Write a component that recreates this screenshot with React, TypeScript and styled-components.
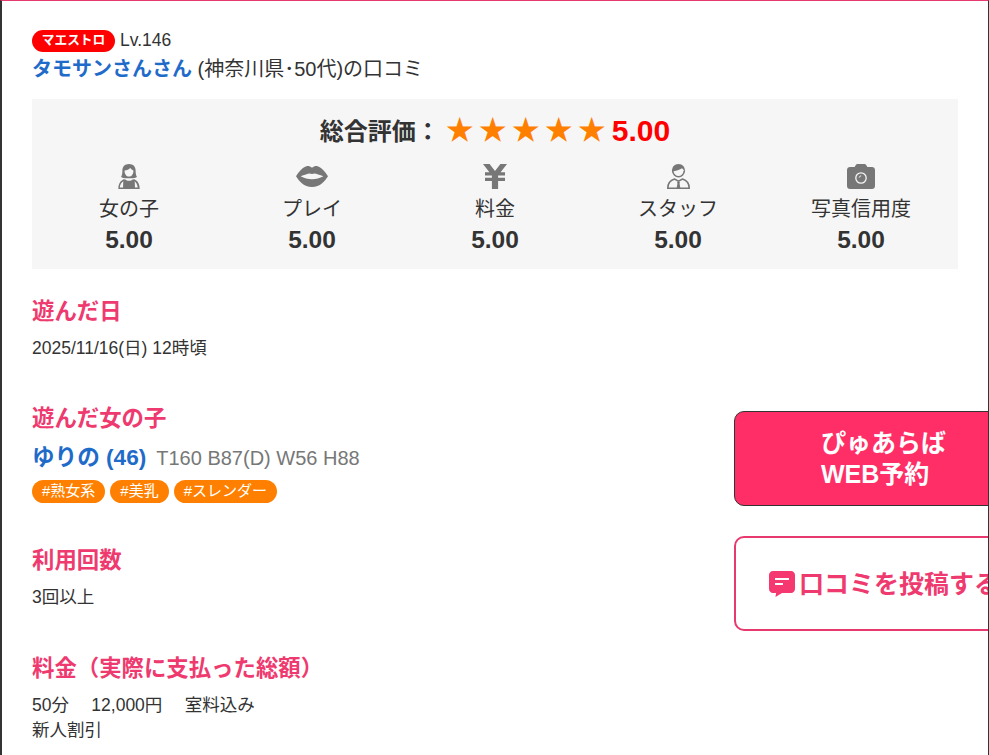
import styled, {createGlobalStyle} from "styled-components";

const GlobalStyle = createGlobalStyle`
    html, body {
        margin: 0;
        padding: 0;
        background: #fff;
        overflow: hidden;
    }
    body {
        font-family: "Liberation Sans", "Noto Sans CJK JP", sans-serif;
        color: #333;
    }
`

const scores = [
    {label: "女の子", icon: <GirlIcon/>},
    {label: "プレイ", icon: <LipsIcon/>},
    {label: "料金", icon: <YenIcon/>},
    {label: "スタッフ", icon: <StaffIcon/>},
    {label: "写真信用度", icon: <CameraIcon/>},
];

const tags = ["#熟女系", "#美乳", "#スレンダー"];

function GirlIcon(){
    return(
        <svg width="22" height="25" viewBox="0 0 22 25">
            <path fill="#777" d="M11 0C6.800 0 4.400 2.800 4.400 6.400c0 2.800-.4 4.800-1.400 6.600 1.400.8 3 1.200 4.400 1.200h7.200c1.400 0 3-.4 4.400-1.200-1-1.800-1.400-3.800-1.400-6.600C17.600 2.800 15.200 0 11 0z"/>
            <path fill="#f6f6f6" d="M6.600 6.400c2.400 0 4.200-.8 5.600-2.400 1 1.200 2 2.100 3.200 2.400.2 3.400-1.800 6.200-4.400 6.200S6.400 9.800 6.600 6.400z"/>
            <path fill="#777" d="M.3 25c0-4.400 1.300-7.400 4.500-9.200l.9-.5.5 1.400C3.400 18 2 20.400 1.800 23.600H5.200V25zM21.700 25c0-4.400-1.300-7.400-4.500-9.200l-.9-.5-.5 1.400c2.300 1.300 3.700 3.700 3.900 6.900h-2.900V25z"/>
            <path fill="#777" d="M7 15.200c1.200 1 2.600 1.500 4 1.500s2.800-.5 4-1.500l1.700.6.3 9.200H5l.3-9.200z"/>
        </svg>
    )
}

function LipsIcon(){
    return(
        <svg width="32" height="21" viewBox="0 0 32 21">
            <path fill="#777" fillRule="evenodd" d="M0 10.200C3 5.400 7 1 10.500.2c2-.4 3.800.3 5.500 1.500C17.700.5 19.500-.2 21.500.2 25 1 29 5.400 32 10.200 29 15 24 21 16 21S3 15 0 10.200zm4.600 0c3.600 2 7.400 3 11.400 3s7.800-1 11.400-3c-3.600-1.300-7.400-2.800-8.900-2.800-1 0-1.700.5-2.500.5s-1.500-.5-2.500-.5c-1.500 0-5.300 1.500-8.900 2.800z"/>
        </svg>
    )
}

function YenIcon(){
    return(
        <svg width="24" height="25" viewBox="0 0 24 25">
            <path fill="#777" d="M0 0h6.600L12 7 17.400 0H24l-6.400 8.200H22v3.200h-6.900v2.400H22V17h-6.900v8H8.900v-8H2v-3.200h6.900v-2.400H2V8.200h4.400z"/>
        </svg>
    )
}

function StaffIcon(){
    return(
        <svg width="23" height="25" viewBox="0 0 23 25">
            <path fill="#777" d="M5 7.400C4.800 3 7.500 0 11.500 0S18.200 3 18 7.400c-1-1.200-2-2.400-3-3.200-2 1.500-6 2.800-10 3.200z"/>
            <path fill="none" stroke="#777" strokeWidth="1.600" d="M5.600 6.500c.2 3.600 2.900 6.300 5.900 6.300s5.700-2.700 5.900-6.300"/>
            <path fill="none" stroke="#777" strokeWidth="1.600" d="M.8 24.200c0-4.800 2.300-7.800 6.700-9.200l4 2.200 4-2.200c4.400 1.400 6.700 4.400 6.700 9.200z"/>
            <path fill="#777" d="M10.100 17.800h2.800l-.3 2 .8 4.800H9.600l.8-4.800z"/>
        </svg>
    )
}

function CameraIcon(){
    return(
        <svg width="28" height="25" viewBox="0 0 28 25">
            <path fill="#777" d="M3 3h4.600L9 .8C9.300.3 9.800 0 10.400 0h7.200c.6 0 1.100.3 1.400.8L20.400 3H25c1.700 0 3 1.300 3 3v16c0 1.700-1.300 3-3 3H3c-1.700 0-3-1.300-3-3V6c0-1.700 1.300-3 3-3z"/>
            <circle cx="14" cy="14" r="5.200" fill="none" stroke="#f6f6f6" strokeWidth="1.300"/>
            <path fill="none" stroke="#f6f6f6" strokeWidth="1" d="M12.200 13.600a2.200 2.200 0 0 1 1.900-1.800"/>
        </svg>
    )
}

function CommentIcon(){
    return(
        <svg width="26" height="26" viewBox="0 0 26 26">
            <path fill="#f5386f" d="M4 0h18c2.200 0 4 1.800 4 4v14c0 2.200-1.800 4-4 4H13l-6.500 4 .6-4H4c-2.200 0-4-1.800-4-4V4c0-2.200 1.800-4 4-4z"/>
            <path fill="#fff" d="M6 7h14v2H6zM6 12h8v2H6z"/>
        </svg>
    )
}

function App(){
    return(
        <>
            <GlobalStyle/>
            <PageWrapper>
                <Reviewer>
                    <RankRow>
                        <RankBadge>マエストロ</RankBadge>
                        <Level>Lv.146</Level>
                    </RankRow>
                    <ReviewerLine>
                        <ReviewerName>タモサンさんさん</ReviewerName> (神奈川県･50代)の口コミ
                    </ReviewerLine>
                </Reviewer>
                <ScorePanel>
                    <TotalRow>
                        <TotalLabel>総合評価：</TotalLabel>
                        <Stars>★★★★★</Stars>
                        <TotalValue>5.00</TotalValue>
                    </TotalRow>
                    <ScoreGrid>
                        {scores.map((score) => (
                            <ScoreItem key={score.label}>
                                <ScoreIcon>{score.icon}</ScoreIcon>
                                <ScoreLabel>{score.label}</ScoreLabel>
                                <ScoreValue>5.00</ScoreValue>
                            </ScoreItem>
                        ))}
                    </ScoreGrid>
                </ScorePanel>
                <Section $gap={28}>
                    <SectionTitle>遊んだ日</SectionTitle>
                    <SectionText>2025/11/16(日) 12時頃</SectionText>
                </Section>
                <Section $gap={43}>
                    <SectionTitle>遊んだ女の子</SectionTitle>
                    <GirlRow>
                        <GirlName>ゆりの (46)</GirlName>
                        <GirlSize>T160 B87(D) W56 H88</GirlSize>
                    </GirlRow>
                    <TagRow>
                        {tags.map((tag) => <Tag key={tag}>{tag}</Tag>)}
                    </TagRow>
                </Section>
                <Section $gap={43}>
                    <SectionTitle>利用回数</SectionTitle>
                    <SectionText>3回以上</SectionText>
                </Section>
                <Section $gap={44}>
                    <SectionTitle>料金（実際に支払った総額）</SectionTitle>
                    <SectionText>50分　 12,000円　 室料込み<br/>新人割引</SectionText>
                </Section>
                <FloatingButtons>
                    <ReserveButton>ぴゅあらば<br/>WEB予約</ReserveButton>
                    <PostButton><CommentIcon/><PostLabel>口コミを投稿する</PostLabel></PostButton>
                </FloatingButtons>
            </PageWrapper>
        </>
    )
}

const PageWrapper = styled.div`
    position: relative;
    box-sizing: border-box;
    height: 755px;
    overflow: hidden;
    padding: 28px 30px 0 30px;
    background: #fff;
    border-top: 1px solid #e8396f;
    border-left: 2px solid #333;
    border-right: 1px solid #333;
`

const Reviewer = styled.div`
    margin-bottom: 16px;
`

const RankRow = styled.div`
    display: flex;
    align-items: center;
    gap: 5px;
    height: 23px;
`

const RankBadge = styled.span`
    display: block;
    width: 83px;
    height: 22px;
    line-height: 20px;
    border-radius: 11px;
    background: #ff0000;
    color: #fff;
    font-size: 12.700px;
    font-weight: bold;
    text-align: center;
`

const Level = styled.span`
    font-size: 17.500px;
`

const ReviewerLine = styled.div`
    margin-top: 3px;
    font-size: 20px;
    line-height: 28px;
`

const ReviewerName = styled.span`
    color: #1f6bc9;
    font-size: 20px;
    font-weight: bold;
`

const ScorePanel = styled.div`
    box-sizing: border-box;
    height: 170px;
    padding: 14px 5.500px 0;
    background: #f6f6f6;
`

const TotalRow = styled.div`
    display: flex;
    justify-content: center;
    align-items: center;
    height: 36px;
`

const TotalLabel = styled.span`
    margin-right: 6px;
    padding-bottom: 3px;
    font-size: 24px;
    font-weight: bold;
`

const Stars = styled.span`
    margin-right: 1px;
    color: #ff8000;
    font-size: 28px;
    letter-spacing: 5px;
    line-height: 36px;
`

const TotalValue = styled.span`
    color: #ff0000;
    font-size: 30px;
    font-weight: bold;
`

const ScoreGrid = styled.div`
    display: grid;
    grid-template-columns: repeat(5, 1fr);
    margin-top: 15px;
`

const ScoreItem = styled.div`
    display: flex;
    flex-direction: column;
    align-items: center;
`

const ScoreIcon = styled.div`
    display: flex;
    justify-content: center;
    align-items: center;
    height: 25px;
`

const ScoreLabel = styled.div`
    margin-top: 4px;
    font-size: 20px;
    line-height: 32px;
`

const ScoreValue = styled.div`
    font-size: 24.500px;
    font-weight: bold;
    line-height: 30px;
`

const Section = styled.section<{$gap: number}>`
    margin-top: ${(props) => props.$gap}px;
`

const SectionTitle = styled.h3`
    margin: 0;
    color: #ee3a6f;
    font-size: 22.400px;
    font-weight: bold;
    line-height: 30px;
`

const SectionText = styled.p`
    margin: 9px 0 0;
    font-size: 17.500px;
    line-height: 25px;
`

const GirlRow = styled.div`
    display: flex;
    align-items: baseline;
    gap: 10px;
    margin-top: 5px;
`

const GirlName = styled.span`
    color: #1f6bc9;
    font-size: 22.600px;
    font-weight: bold;
`

const GirlSize = styled.span`
    color: #777;
    font-size: 20px;
`

const TagRow = styled.div`
    display: flex;
    gap: 5px;
    margin-top: 8px;
`

const Tag = styled.span`
    height: 23px;
    padding: 0 10px;
    border-radius: 12px;
    background: #ff8000;
    color: #fff;
    font-size: 15px;
    line-height: 22px;
`

const FloatingButtons = styled.div`
    position: absolute;
    top: 410px;
    right: -41px;
    display: flex;
    flex-direction: column;
    gap: 30px;
    width: 295px;
`

const ReserveButton = styled.div`
    box-sizing: border-box;
    height: 95px;
    padding: 16px 0 0 86px;
    border: 1px solid #333;
    border-radius: 10px;
    background: #ff2e67;
    color: #fff;
    font-size: 25px;
    font-weight: bold;
    line-height: 31px;
`

const PostButton = styled.div`
    box-sizing: border-box;
    display: flex;
    align-items: center;
    gap: 4px;
    height: 95px;
    padding-left: 33px;
    border: 2px solid #e8396f;
    border-radius: 10px;
    background: #fff;
    color: #ee3a6f;
    font-size: 25px;
    font-weight: bold;
    white-space: nowrap;
`

const PostLabel = styled.span`
    margin-bottom: 4px;
`

export default App;
